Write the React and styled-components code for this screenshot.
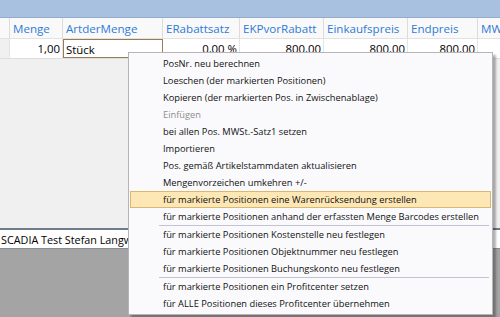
import React from 'react';
import styled, { createGlobalStyle } from 'styled-components';

const columns = [
  { title: '', width: 10 },
  { title: 'Menge', width: 53, value: '1,00', align: 'right' },
  { title: 'ArtderMenge', width: 100, value: 'Stück', align: 'left', edit: true },
  { title: 'ERabattsatz', width: 77, value: '0,00 %', align: 'right' },
  { title: 'EKPvorRabatt', width: 84, value: '800,00', align: 'right' },
  { title: 'Einkaufspreis', width: 84, value: '800,00', align: 'right' },
  { title: 'Endpreis', width: 70, value: '800,00', align: 'right' },
  { title: 'MWSt', width: 60, value: '', align: 'right' },
];

const menuItems = [
  { label: 'PosNr. neu berechnen' },
  { label: 'Loeschen (der markierten Positionen)' },
  { label: 'Kopieren (der markierten Pos. in Zwischenablage)' },
  { label: 'Einfügen', disabled: true },
  { label: 'bei allen Pos. MWSt.-Satz1 setzen' },
  { label: 'Importieren' },
  { label: 'Pos. gemäß Artikelstammdaten aktualisieren' },
  { label: 'Mengenvorzeichen umkehren +/-' },
  { label: 'für markierte Positionen eine Warenrücksendung erstellen', active: true },
  { label: 'für markierte Positionen anhand der erfassten Menge Barcodes erstellen', separator: true },
  { label: 'für markierte Positionen Kostenstelle neu festlegen' },
  { label: 'für markierte Positionen Objektnummer neu festlegen' },
  { label: 'für markierte Positionen Buchungskonto neu festlegen', separator: true },
  { label: 'für markierte Positionen ein Profitcenter setzen' },
  { label: 'für ALLE Positionen dieses Profitcenter übernehmen' },
];

const App = () => {
  return (
    <Screen>
      <GlobalStyle />
      <TitleBar />
      <HeaderRow>
        {columns.map((c, i) => (
          <HeaderCell key={i} $w={c.width}>{c.title}</HeaderCell>
        ))}
      </HeaderRow>
      <DataRow>
        {columns.map((c, i) => (
          <DataCell key={i} $w={c.width} $align={c.align} $edit={c.edit} $stub={i === 0}>
            {c.value}
          </DataCell>
        ))}
      </DataRow>
      <EmptyArea />
      <Footer>SCADIA Test Stefan Langwieser</Footer>
      <Desktop />

      <Menu>
        {menuItems.map((m, i) => (
          <React.Fragment key={i}>
            <MenuItem $disabled={m.disabled} $active={m.active}>{m.label}</MenuItem>
            {m.separator && <Separator />}
          </React.Fragment>
        ))}
      </Menu>
    </Screen>
  );
};

//styled components
const GlobalStyle = createGlobalStyle`
  body {
    margin: 0;
    overflow: hidden;
    font-family: "Open Sans", "Noto Sans", sans-serif;
  }
`;

const Screen = styled.div`
  position: relative;
  width: 500px;
  height: 317px;
  overflow: hidden;
  display: flex;
  flex-direction: column;
  background: #f0f0f0;
`;

const TitleBar = styled.div`
  height: 17px;
  background: #a9c1e1;
  border-bottom: 1px solid #93abcf;
`;

const HeaderRow = styled.div`
  display: flex;
  height: 20px;
  background: #f9f9f9;
  border-bottom: 1px solid #e2e2e2;
`;

const HeaderCell = styled.div`
  flex: 0 0 ${p => p.$w}px;
  box-sizing: border-box;
  padding: 3px 0 0 3px;
  border-right: 1px solid #dcdcdc;
  color: #2f7bd6;
  font-size: 11.6px;
  line-height: 16px;
  white-space: nowrap;
  overflow: hidden;
`;

const DataRow = styled.div`
  display: flex;
  height: 19px;
  background: #fff;
  border-bottom: 1px solid #dedede;
`;

const DataCell = styled.div`
  flex: 0 0 ${p => p.$w}px;
  box-sizing: border-box;
  padding: 0 2px;
  text-align: ${p => p.$align || 'left'};
  border-right: 1px solid #e4e4e4;
  border: ${p => (p.$edit ? '1px solid #9c7a58' : undefined)};
  background: ${p => (p.$stub ? '#f0f0f0' : '#fff')};
  color: #000;
  font-size: 11.4px;
  line-height: 19px;
  white-space: nowrap;
  overflow: hidden;
`;

const EmptyArea = styled.div`
  height: 169px;
  background: #f0f0f0;
`;

const Footer = styled.div`
  height: 18px;
  border-top: 2px solid #6e7c8d;
  border-bottom: 1px solid #8a8f96;
  background: #fff;
  padding-left: 1px;
  font-size: 10.8px;
  line-height: 20px;
  color: #000;
  white-space: nowrap;
  overflow: hidden;
`;

const Desktop = styled.div`
  flex: 1;
  background: #a4a4a4;
`;

const Menu = styled.div`
  position: absolute;
  left: 128px;
  top: 52px;
  width: 365px;
  box-sizing: border-box;
  padding: 2px 1px 2px 1px;
  background: #fafafc;
  border: 1px solid #b9b3b8;
  box-shadow: 3px 3px 2px rgba(0, 0, 0, 0.3);
`;

const MenuItem = styled.div`
  box-sizing: border-box;
  height: 17px;
  padding-left: 32px;
  font-size: 9.3px;
  line-height: 15px;
  white-space: nowrap;
  color: ${p => (p.$disabled ? '#8d8d8d' : '#111')};
  background: ${p => (p.$active ? '#fde7b4' : 'transparent')};
  border: 1px solid ${p => (p.$active ? '#d9b874' : 'transparent')};
`;

const Separator = styled.div`
  height: 1px;
  margin: 0 2px 0 29px;
  background: #c3c3d3;
`;

export default App;
